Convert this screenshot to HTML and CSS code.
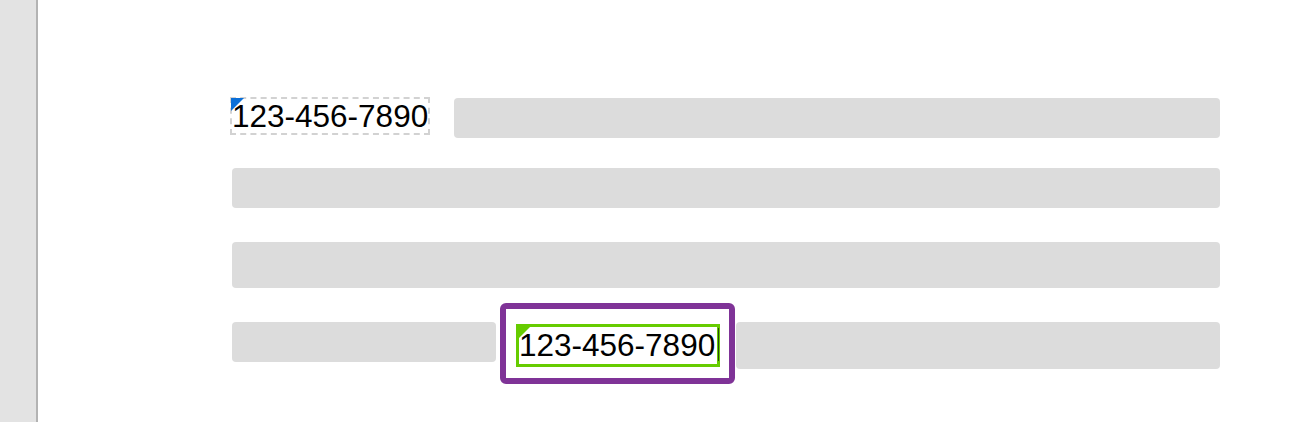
FILE: index.html
```html
<!DOCTYPE html>
<html>
<head>
<meta charset="utf-8">
<link rel="stylesheet" href="styles.css">
</head>
<body>
<div class="page">
  <aside class="sidebar"></aside>
  <main class="main">
    <div class="row row1">
      <div class="field dashed"><span class="tri tri-blue"></span>123-456-7890</div>
      <div class="bar bar-r1"></div>
    </div>
    <div class="row row2"><div class="bar bar-full"></div></div>
    <div class="row row3"><div class="bar bar-tall"></div></div>
    <div class="row row4">
      <div class="bar bar-left"></div>
      <div class="focus">
        <div class="field green"><span class="tri tri-green"></span>123-456-7890<span class="caret"></span></div>
      </div>
      <div class="bar bar-right"></div>
    </div>
  </main>
</div>
</body>
</html>
```
FILE: styles.css
```css
html, body { margin: 0; padding: 0; background: #fff; }
body { font-family: "Liberation Sans", Arial, sans-serif; color: #000; }
.page { display: flex; width: 1300px; height: 422px; overflow: hidden; }
.sidebar { width: 36px; flex: none; background: #e3e3e3; border-right: 2px solid #b3b3b3; }
.main { flex: 1; padding: 97px 80px 0 194px; display: flex; flex-direction: column; }
.row { display: flex; align-items: flex-start; }
.bar { background: #dcdcdc; border-radius: 4px; }
.row1 .dashed { margin-left: -2px; }
.field { position: relative; box-sizing: border-box; font-size: 31.5px; line-height: 36px; white-space: nowrap; }
.dashed { width: 200px; height: 38px; border: 2px dashed #d2d2d2; padding-left: 0; line-height: 34px; }
.bar-r1 { flex: 1; height: 40px; margin-left: 24px; margin-top: 1px; }
.row2 { margin-top: 30px; }
.row3 { margin-top: 34px; }
.bar-full { flex: 1; height: 40px; }
.bar-tall { flex: 1; height: 46px; }
.row4 { margin-top: 15px; }
.bar-left { width: 264px; height: 40px; margin-top: 19px; }
.focus { box-sizing: border-box; width: 235px; height: 81px; margin-left: 4px; border: 6px solid #7f3397; border-radius: 6px; padding: 15px 0 0 10px; background: #fff; }
.green { width: 204px; height: 43px; border: 3px solid #66cc00; line-height: 37px; padding-left: 0; }
.caret { position: absolute; right: -2px; top: 1px; width: 1px; height: 33px; background: #2a4a10; }
.bar-right { flex: 1; height: 47px; margin-left: 1px; margin-top: 19px; }
.tri { position: absolute; left: -1px; top: -1px; width: 0; height: 0; border-style: solid; }
.tri-blue { border-width: 13px 13px 0 0; border-color: #0b6fd8 transparent transparent transparent; }
.tri-green { left: 0; top: 0; border-width: 11px 11px 0 0; border-color: #66cc00 transparent transparent transparent; }
```
